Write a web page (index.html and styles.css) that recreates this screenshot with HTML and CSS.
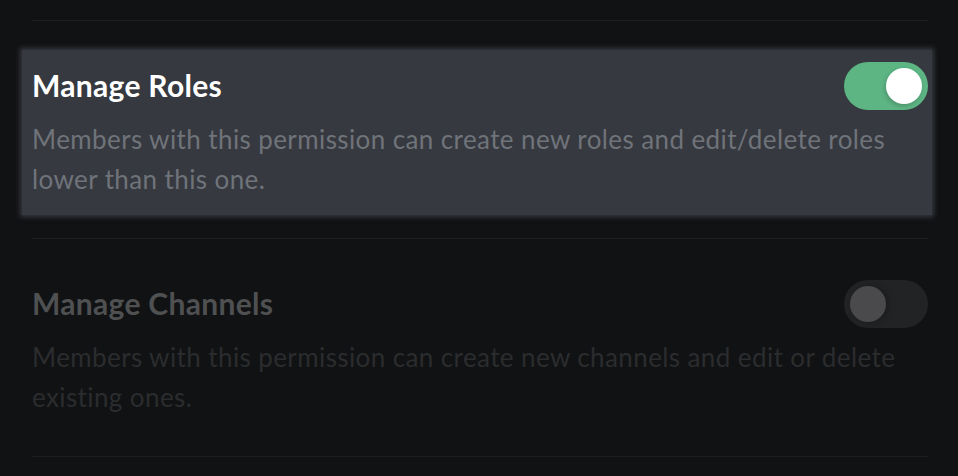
FILE: index.html
```html
<!DOCTYPE html>
<html lang="en">
<head>
  <meta charset="UTF-8" />
  <title>Role permissions</title>
  <link rel="stylesheet" href="styles.css">
</head>
<body>

<div class="perms">
  <div class="perm-row">
    <div class="perm active">
      <div class="perm-head">
        <h3>Manage Roles</h3>
        <div class="switch on"><span class="knob"></span></div>
      </div>
      <p class="perm-desc">Members with this permission can create new roles and edit/delete roles lower than this one.</p>
    </div>
  </div>
  <div class="perm-row">
    <div class="perm off">
      <div class="perm-head">
        <h3>Manage Channels</h3>
        <div class="switch"><span class="knob"></span></div>
      </div>
      <p class="perm-desc">Members with this permission can create new channels and edit or delete existing ones.</p>
    </div>
  </div>
  <div class="perm-row last"></div>
</div>

</body>
</html>
```

FILE: styles.css
```css
body { margin: 0; background: #111214; font-family: Lato, 'Open Sans', sans-serif; height: 476px; overflow: hidden; }
.perms { padding: 20px 30px 0 32px; }
.perm-row { border-top: 1px solid #1d1e21; padding: 29px 0 23px; }
.perm-row.last { padding: 0; }
.perm { padding: 12px 0 16px; }
.perm.active { background: #36393f; margin: 0 -4px 0 -10px; padding: 12px 4px 16px 10px; box-shadow: 0 0 5px 2px #36393f; }
.perm-head { display: flex; align-items: center; justify-content: space-between; height: 48px; }
.perm-head h3 { margin: 0 0 3px; font-size: 30px; font-weight: 700; color: #fff; letter-spacing: 0.3px; }
.perm-desc { margin: 9px 0 0; font-size: 26px; line-height: 40px; color: #6f737a; letter-spacing: 0.4px; }
.perm.off h3 { color: #4f5052; }
.perm.off .perm-desc { color: #2b2c2e; }
.switch { width: 84px; height: 48px; border-radius: 24px; background: #222325; position: relative; flex-shrink: 0; }
.switch .knob { position: absolute; left: 6px; top: 6px; width: 36px; height: 36px; border-radius: 50%; background: #4a4a4c; box-shadow: 2px 0 6px rgba(0,0,0,0.25); }
.switch.on { background: #5db584; }
.switch.on .knob { left: auto; right: 6px; background: #fff; box-shadow: -1px 2px 5px rgba(0,0,0,0.2); }
```
